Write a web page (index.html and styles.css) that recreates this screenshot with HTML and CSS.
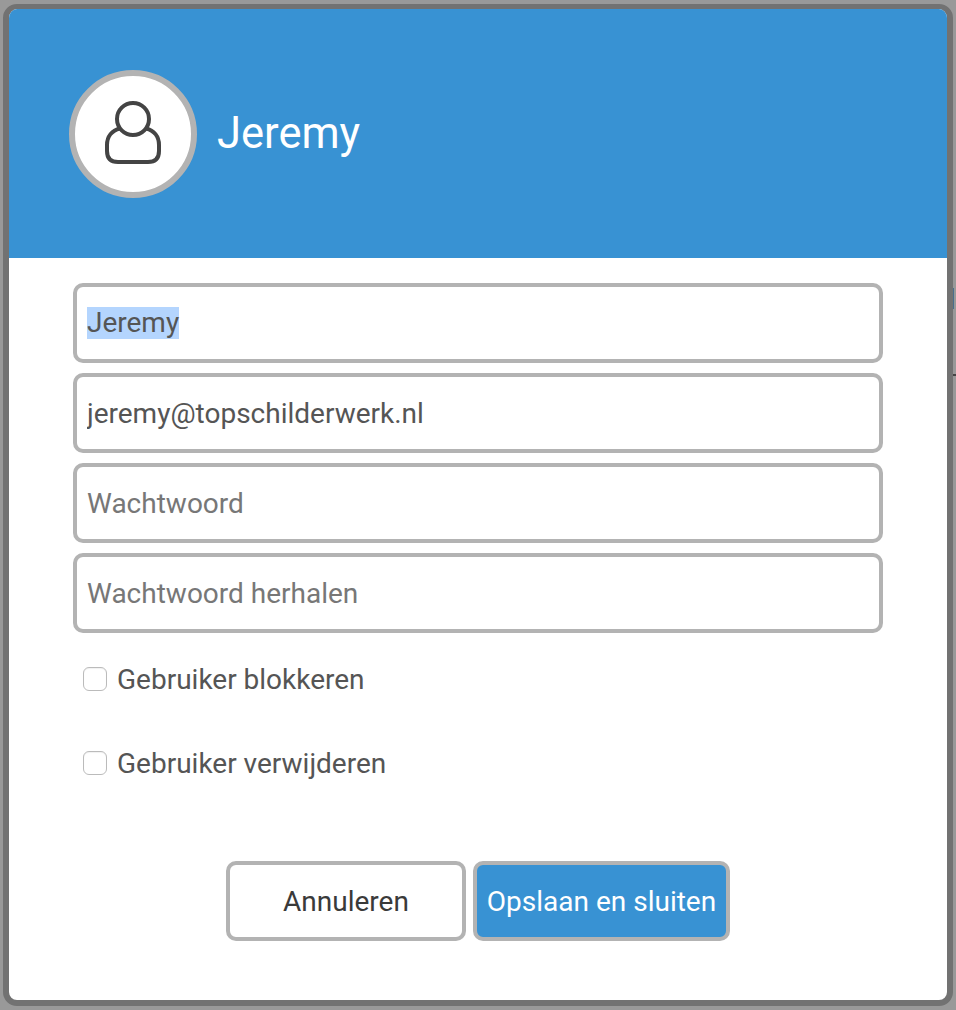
FILE: index.html
```html
<!DOCTYPE html>
<html>
<head>
  <meta charset="UTF-8">
  <title>Gebruiker bewerken</title>
  <link rel="stylesheet" href="styles.css">
</head>
<body>
  <span class="behind behind-a"></span>
  <span class="behind behind-b"></span>
  <div class="dialog">
    <div class="dialog-header">
      <div class="avatar">
        <svg class="avatar-icon" width="60" height="66" viewBox="0 0 60 66" fill="none" stroke="#444" stroke-width="4">
          <circle cx="30" cy="19" r="16"/>
          <path d="M17 28.5C9 30.5 4 36.5 4 45V51Q4 62 15 62H45Q56 62 56 51V45C56 36.5 51 30.5 43 28.5"/>
        </svg>
      </div>
      <div class="user-name">Jeremy</div>
    </div>
    <form class="dialog-body">
      <div class="fields">
        <div class="field"><span class="selected">Jeremy</span></div>
        <input class="field" type="text" value="jeremy@topschilderwerk.nl">
        <input class="field" type="password" placeholder="Wachtwoord">
        <input class="field" type="password" placeholder="Wachtwoord herhalen">
      </div>
      <div class="checks">
        <label class="check"><input type="checkbox"> Gebruiker blokkeren</label>
        <label class="check"><input type="checkbox"> Gebruiker verwijderen</label>
      </div>
      <div class="actions">
        <button type="button" class="btn btn-cancel">Annuleren</button>
        <button type="button" class="btn btn-save">Opslaan en sluiten</button>
      </div>
    </form>
  </div>
</body>
</html>
```

FILE: styles.css
```css
* {
  box-sizing: border-box;
}
html, body {
  height: 100%;
}
body {
  margin: 0;
  padding: 4px 3px;
  background-color: #999;
  font-family: Roboto, "Liberation Sans", sans-serif;
  overflow: hidden;
}
/* page content peeking out next to the dialog */
.behind {
  position: absolute;
  right: 2px;
  width: 1px;
}
.behind-a {
  top: 288px;
  height: 21px;
  background-color: #4a6f8c;
}
.behind-b {
  top: 374px;
  right: 0;
  width: 3px;
  height: 2px;
  background-color: #444;
}
.dialog {
  width: 950px;
  height: 1002px;
  border: 6px solid #727272;
  border-top-width: 5px;
  border-radius: 14px;
  background-color: #fff;
  overflow: hidden;
}
.dialog-header {
  display: flex;
  align-items: center;
  gap: 20px;
  height: 249px;
  padding-left: 60px;
  background-color: #3892d3;
}
.avatar {
  display: flex;
  align-items: center;
  justify-content: center;
  width: 128px;
  height: 128px;
  border: 6px solid #b3b3b3;
  border-radius: 50%;
  background-color: #fff;
}
.avatar-icon {
  margin: 0 1px 2px 0;
}
.user-name {
  margin-bottom: 1px;
  font-size: 43.5px;
  color: #fff;
}
.dialog-body {
  padding: 25px 64px 0;
}
.fields {
  display: flex;
  flex-direction: column;
  gap: 10px;
}
.field {
  display: flex;
  align-items: center;
  width: 810px;
  height: 80px;
  padding: 0 10px;
  border: 4px solid #b3b3b3;
  border-radius: 10px;
  background-color: #fff;
  font-family: inherit;
  font-size: 28px;
  color: #555;
  outline: none;
}
.field::placeholder {
  color: #777;
  opacity: 1;
}
.selected {
  background-color: #b4d5fe;
  line-height: 32px;
}
.checks {
  margin-top: 4px;
}
.check {
  display: flex;
  align-items: center;
  gap: 10px;
  height: 84px;
  padding-left: 10px;
  font-size: 28px;
  color: #555;
}
.check input {
  appearance: none;
  width: 24px;
  height: 24px;
  margin: 0;
  border: 1px solid #bbb;
  border-radius: 6px;
  background-color: #fff;
  box-shadow: inset 0 1px 1px rgba(0, 0, 0, 0.06);
}
.actions {
  display: flex;
  justify-content: center;
  gap: 7px;
  margin-top: 56px;
}
.btn {
  height: 80px;
  border: 4px solid #b3b3b3;
  border-radius: 10px;
  font-family: inherit;
  font-size: 28px;
  padding: 0;
}
.btn-cancel {
  width: 240px;
  background-color: #fff;
  color: #3a3a3a;
}
.btn-save {
  width: 257px;
  background-color: #3892d3;
  color: #fff;
}
```
